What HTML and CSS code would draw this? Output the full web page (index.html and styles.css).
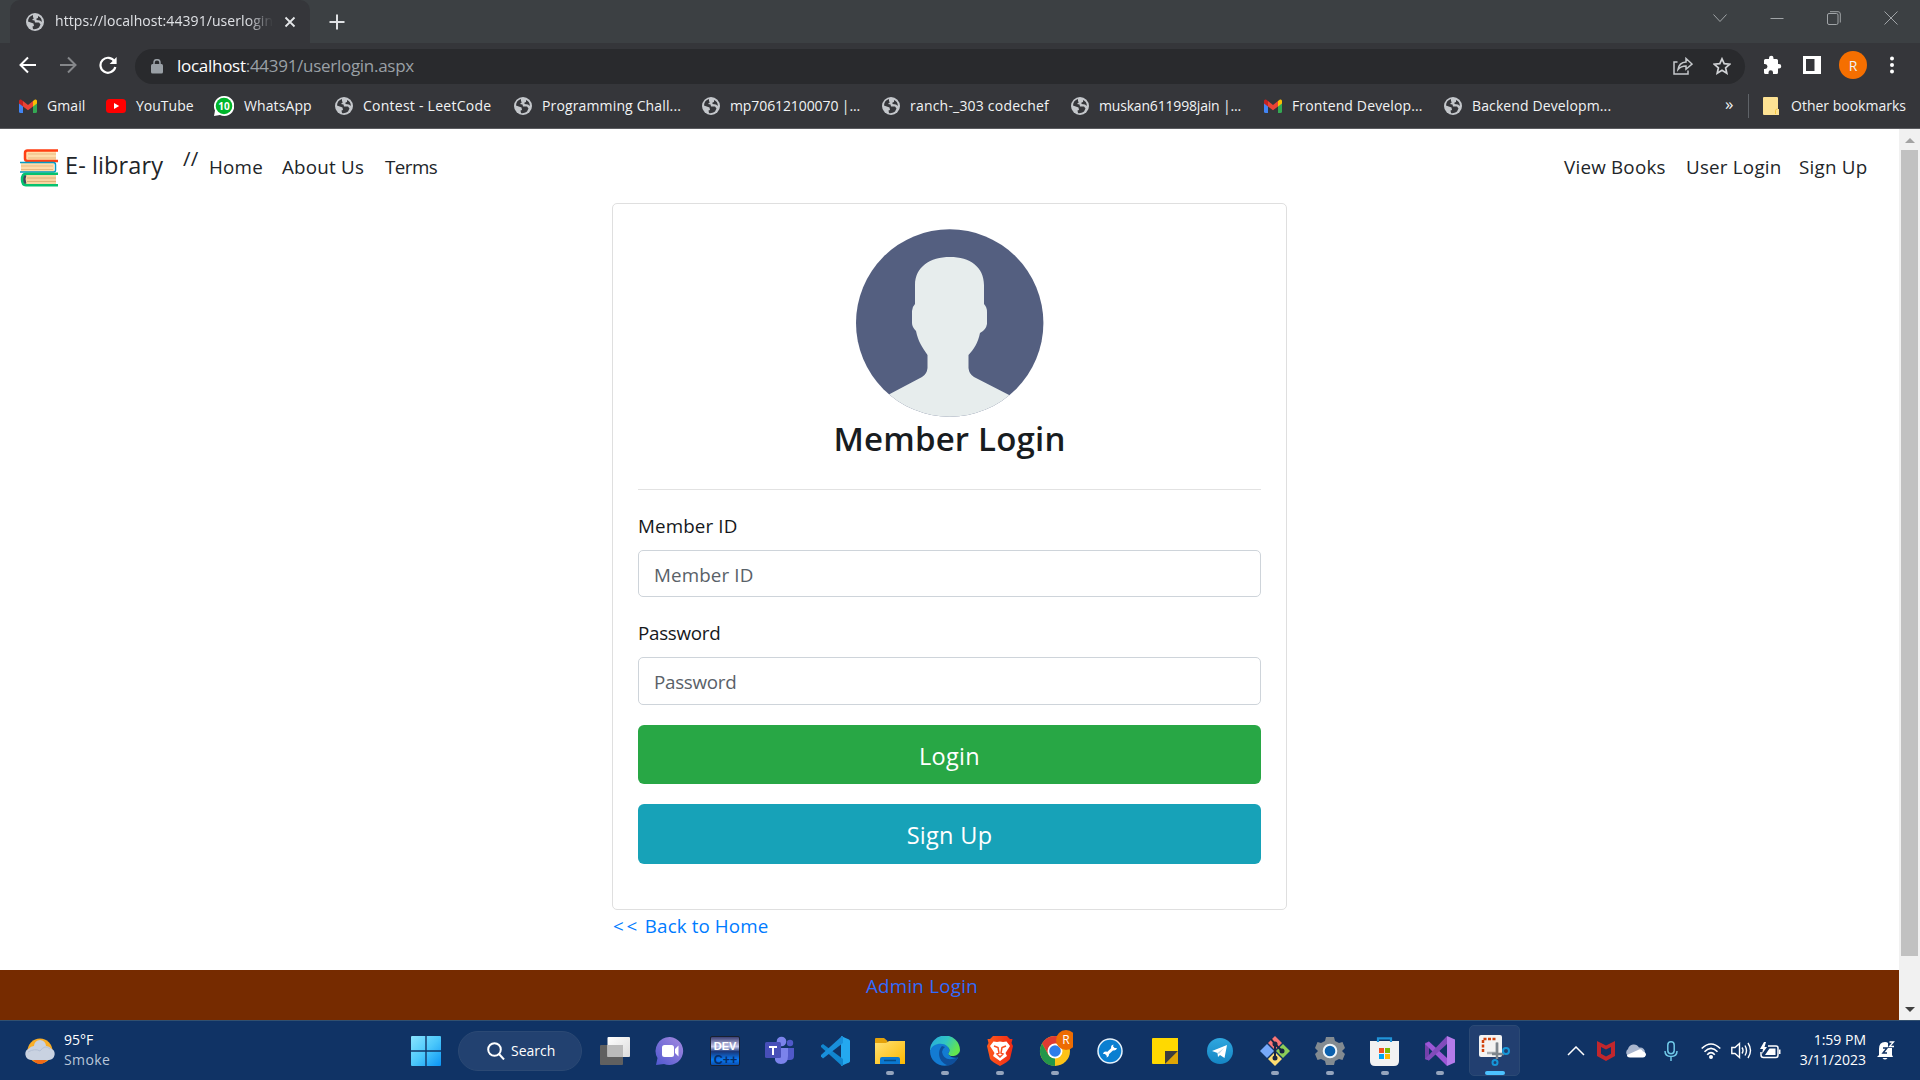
FILE: index.html
```html
<!DOCTYPE html>
<html lang="en">
<head>
<meta charset="utf-8">
<title>E- library</title>
<link rel="stylesheet" href="styles.css">
</head>
<body>
<svg class="defs" width="0" height="0">
  <defs>
    <symbol id="globe" viewBox="0 0 18 18"><circle cx="9" cy="9" r="9" fill="#c4c7cb"/><path d="M7 2C4 3 2 5 2 8.500L7.500 10.500 8 13 6.500 13.500 7 16C8.500 16.500 11 16 13 14.500L14.500 11.500 13 9.500H9L8.500 7.500 6 7 8 5 7 4.500zM12 3V5L10.500 5.500V7L14 7.500 15.800 9C16 6 14.500 4 12 3z" fill="#35363a"/></symbol>
    <symbol id="gmail" viewBox="0 0 18 14"><path d="M0 2V12.500Q0 14 1.500 14H4V5z" fill="#4285f4"/><path d="M18 2V12.500Q18 14 16.500 14H14V5z" fill="#34a853"/><path d="M14 2 16 .5Q18 0 18 2V4.500L14 7.500z" fill="#fbbc04"/><path d="M0 4.500V2Q0 0 2 .5L4 2V7.500z" fill="#c5221f"/><path d="M4 2 9 6 14 2V7.500L9 11.300 4 7.500z" fill="#ea4335"/></symbol>
    <linearGradient id="gwin" x1="0" y1="0" x2="1" y2="1"><stop offset="0" stop-color="#8ae4ff"/><stop offset=".5" stop-color="#4cc8fb"/><stop offset="1" stop-color="#0a94f5"/></linearGradient>
    <linearGradient id="gview" x1="0" y1="0" x2="1" y2="1"><stop offset="0" stop-color="#fff"/><stop offset="1" stop-color="#dcdcdc"/></linearGradient>
    <linearGradient id="gchat" x1="1" y1="0" x2="0" y2="1"><stop offset="0" stop-color="#a58ae0"/><stop offset="1" stop-color="#5058d0"/></linearGradient>
    <linearGradient id="gdev" x1="0" y1="0" x2="0" y2="1"><stop offset="0" stop-color="#363a70"/><stop offset=".35" stop-color="#c4c8ed"/><stop offset=".52" stop-color="#193779"/><stop offset=".8" stop-color="#087af5"/><stop offset="1" stop-color="#0b4ca8"/></linearGradient>
    <linearGradient id="gfold" x1="0" y1="0" x2="1" y2="1"><stop offset="0" stop-color="#ffe174"/><stop offset="1" stop-color="#fdb900"/></linearGradient>
    <linearGradient id="gedge" x1="0" y1="0" x2="1" y2=".4"><stop offset="0" stop-color="#28a8df"/><stop offset=".55" stop-color="#30c5c4"/><stop offset="1" stop-color="#63e54e"/></linearGradient>
    <linearGradient id="gbrave" x1="0" y1="0" x2="1" y2="0"><stop offset="0" stop-color="#ff5a1c"/><stop offset="1" stop-color="#ef2a15"/></linearGradient>
    <linearGradient id="gtele" x1="0" y1="0" x2="0" y2="1"><stop offset="0" stop-color="#2fa7df"/><stop offset="1" stop-color="#1586c4"/></linearGradient>
  </defs>
</svg>

<header class="browser">
  <div class="tabstrip">
    <div class="tab">
      <svg class="globe" width="18" height="18"><use href="#globe"/></svg>
      <span class="tab-title">https://localhost:44391/userlogin</span>
      <svg class="tab-close" width="12" height="12" viewBox="0 0 12 12"><path d="M1.500 1.500 10.500 10.500M10.500 1.500 1.500 10.500" stroke="#e4e6e8" stroke-width="1.800"/></svg>
    </div>
    <svg class="new-tab" width="16" height="16" viewBox="0 0 16 16"><path d="M8 .5V15.500M.5 8H15.500" stroke="#dfe1e4" stroke-width="2"/></svg>
    <div class="window-controls">
      <svg width="14" height="14" viewBox="0 0 14 14"><path d="M.5 3.500 7 10.500 13.500 3.500"/></svg>
      <svg width="14" height="14" viewBox="0 0 14 14"><path d="M.5 7.500H13.500"/></svg>
      <svg width="14" height="14" viewBox="0 0 14 14"><rect x=".5" y="2.500" width="10.500" height="11" rx="1.500"/><path d="M3 .7H11Q13.300 .7 13.300 3V11.500"/></svg>
      <svg width="14" height="14" viewBox="0 0 14 14"><path d="M.5 .5 13.500 13.500M13.500 .5 .5 13.500"/></svg>
    </div>
  </div>
  <div class="toolbar">
    <svg width="18" height="18" viewBox="0 0 18 18" fill="none" stroke="#fff" stroke-width="2"><path d="M17 9H2M9 1.500 1.500 9 9 16.500"/></svg>
    <svg width="18" height="18" viewBox="0 0 18 18" fill="none" stroke="#85878a" stroke-width="2"><path d="M1 9H16M9 1.500 16.500 9 9 16.500"/></svg>
    <svg width="18" height="18" viewBox="0 0 18 18"><path d="M15.500 5.500A7.500 7.500 0 1 0 16.300 11" fill="none" stroke="#fff" stroke-width="2.200"/><path d="M17.600 1V8H10.600z" fill="#fff"/></svg>
    <div class="omnibox">
      <svg width="12" height="15" viewBox="0 0 12 15"><rect y="5" width="12" height="9.500" rx="1.500" fill="#9aa0a6"/><path d="M3 6V3.700A3 3 0 0 1 9 3.700V6" fill="none" stroke="#9aa0a6" stroke-width="1.500"/></svg>
      <span class="url"><b>localhost</b>:44391/userlogin.aspx</span>
      <svg class="share" width="20" height="18" viewBox="0 0 20 18" fill="none" stroke="#c5c8cb" stroke-width="1.500"><path d="M4.500 5H1V17H15V13.500"/><path d="M5 12.500Q6 5.500 13 5V1.500L19 7 13 12.200V9Q8 9 5 12.500z"/></svg>
      <svg width="18" height="18" viewBox="0 0 18 18"><path d="M9 1.800 11.200 6.600 16.800 7.200 12.600 10.800 13.800 16.200 9 13.300 4.200 16.200 5.400 10.800 1.200 7.200 6.800 6.600z" fill="none" stroke="#d0d2d5" stroke-width="1.700"/></svg>
    </div>
    <div class="tools">
      <svg width="20" height="20" viewBox="0 0 20 20"><path d="M2 5.500Q2 4 3.500 4H7V3A2 2 0 0 1 11.500 3V4H14.500Q16 4 16 5.500V9H17A2 2 0 0 1 17 13.500H16V17.500Q16 19 14.500 19H11V17.500A2 2 0 0 0 6.500 17.500V19H3.500Q2 19 2 17.500V14H3A2 2 0 0 0 3 9H2z" fill="#fff"/></svg>
      <svg width="18" height="18" viewBox="0 0 18 18"><path d="M0 0H18V18H0zM3 3V15H11.500V3z" fill="#fff" fill-rule="evenodd"/></svg>
      <span class="profile">R</span>
      <svg width="6" height="18" viewBox="0 0 6 18" fill="#fff"><circle cx="3" cy="2.500" r="2"/><circle cx="3" cy="9" r="2"/><circle cx="3" cy="15.500" r="2"/></svg>
    </div>
  </div>
  <nav class="bookmarks">
    <span class="bm w-gmail"><svg width="18" height="14"><use href="#gmail"/></svg><span>Gmail</span></span>
    <span class="bm w-yt"><svg width="20" height="14" viewBox="0 0 20 14"><rect width="20" height="14" rx="3.500" fill="#f00"/><path d="M8 4V10L13.200 7z" fill="#fff"/></svg><span>YouTube</span></span>
    <span class="bm w-wa"><svg width="20" height="20" viewBox="0 0 20 20"><path d="M10 0A10 10 0 1 1 6 19L0 20 1 14.500A10 10 0 0 1 10 0" fill="#fff"/><circle cx="10" cy="10" r="8.300" fill="#00b52b"/><text x="10" y="13.500" text-anchor="middle" class="badge10">10</text></svg><span>WhatsApp</span></span>
    <span class="bm w-lc"><svg width="18" height="18"><use href="#globe"/></svg><span>Contest - LeetCode</span></span>
    <span class="bm w-pc"><svg width="18" height="18"><use href="#globe"/></svg><span>Programming Chall...</span></span>
    <span class="bm w-mp"><svg width="18" height="18"><use href="#globe"/></svg><span>mp70612100070 |...</span></span>
    <span class="bm w-rn"><svg width="18" height="18"><use href="#globe"/></svg><span>ranch-_303 codechef</span></span>
    <span class="bm w-mj"><svg width="18" height="18"><use href="#globe"/></svg><span>muskan611998jain |...</span></span>
    <span class="bm w-fe"><svg width="18" height="14"><use href="#gmail"/></svg><span>Frontend Develop...</span></span>
    <span class="bm w-be"><svg width="18" height="18"><use href="#globe"/></svg><span>Backend Developm...</span></span>
    <span class="more">»</span>
    <span class="bm other"><svg width="16" height="18" viewBox="0 0 16 18"><path d="M1 0H14Q15 0 15 1V12H16V18H1Q0 18 0 17V1Q0 0 1 0" fill="#fde293"/><path d="M12.500 17V13.500Q12.500 12 14.500 12" fill="none" stroke="#f5c842"/></svg><span>Other bookmarks</span></span>
  </nav>
</header>

<div class="viewport">
  <main class="page">
    <nav class="navbar">
      <svg class="logo" width="38" height="38" viewBox="0 0 38 38">
        <path d="M6 2H36V12H6z" fill="#ffdcaa"/><path d="M8 5H36M8 9H36" stroke="#e9b981"/>
        <path d="M38 1.500H7.500Q5 1.500 5 4V9.500Q5 12 7.500 12H38" fill="none" stroke="#ff3f13" stroke-width="2.500"/>
        <path d="M1 14H34V23H1z" fill="#ffdcaa"/><path d="M1 17H33M1 20.500H33" stroke="#e9b981"/>
        <path d="M0 13.500H33.500Q35.500 13.500 35.500 16V21Q35.500 23 33.500 23H0" fill="none" stroke="#069bc5" stroke-width="1.500"/>
        <path d="M5 25H36V36H5z" fill="#f8d5a2"/><path d="M7 29H36M7 32.500H36" stroke="#deb078"/><path d="M5 26Q3 30.500 5 35" stroke="#41475e" stroke-width="3" fill="none"/>
        <path d="M38 24.800H6Q2 25 2 30.500T6 36.300H38" fill="none" stroke="#06c270" stroke-width="2.500"/>
      </svg>
      <span class="brand">E- library</span>
      <span class="slashes">//</span>
      <a class="home">Home</a><a class="about">About Us</a><a class="terms">Terms</a>
      <a class="view">View Books</a><a class="user">User Login</a><a class="signup">Sign Up</a>
    </nav>
    <section class="card">
      <svg class="avatar" width="188" height="188" viewBox="0 0 188 188">
        <defs><clipPath id="disc"><circle cx="93.700" cy="94" r="93.700"/></clipPath></defs>
        <g clip-path="url(#disc)"><rect width="188" height="188" fill="#545f80"/>
        <path d="M94 28C114 28 128 38 128 56V75Q131 78 131 83V95Q130 101 124 104C122 114 118 120 112.500 126V139Q113 145 118 148L157 168V188H30V167L66 148Q71 145 71.500 139V126C66 118 62 112 60 102Q56 98 56 94V82Q56 78 59 75V56C59 38 74 28 94 28z" fill="#e7eded"/></g>
      </svg>
      <h1><span>Member Login</span></h1>
      <hr>
      <label class="l-id">Member ID</label>
      <div class="field f-id"><span>Member ID</span></div>
      <label class="l-pw">Password</label>
      <div class="field f-pw"><span>Password</span></div>
      <div class="btn green"><span>Login</span></div>
      <div class="btn teal"><span>Sign Up</span></div>
    </section>
    <a class="back"><span class="arrows">&lt;&lt;</span> Back to Home</a>
    <footer><a>Admin Login</a></footer>
  </main>
  <aside class="scrollbar">
    <svg width="10" height="5" viewBox="0 0 10 5"><path d="M5 0 10 5H0z" fill="#a3a3a3"/></svg>
    <div class="thumb"></div>
    <svg width="10" height="5" viewBox="0 0 10 5"><path d="M0 0H10L5 5z" fill="#404040"/></svg>
  </aside>
</div>

<footer class="taskbar">
  <div class="weather">
    <svg width="30" height="26" viewBox="0 0 30 26"><circle cx="15" cy="13" r="12.500" fill="#f9ae28"/><path d="M7 20H23Q20 26 15 26T7 20" fill="#f26a16"/><path d="M6 22A6 6 0 0 1 4 10.500 6 6 0 0 1 9 8 6 6 0 0 1 21 8 6 6 0 0 1 26 10.500 6 6 0 0 1 24 22z" fill="#c9d2e1"/><path d="M3 14Q10 10 15 13 20 6 25 11" stroke="#b4c0d5" fill="none"/></svg>
    <div class="wtext"><span class="temp">95°F</span><span class="smoke">Smoke</span></div>
  </div>
  <svg class="start" width="30" height="30" viewBox="0 0 30 30"><path d="M1 0H14.300V14.300H0V1Q0 0 1 0M15.700 0H29Q30 0 30 1V14.300H15.700zM0 15.700H14.300V30H1Q0 30 0 29zM15.700 15.700H30V29Q30 30 29 30H15.700z" fill="url(#gwin)"/></svg>
  <div class="search"><svg width="18" height="18" viewBox="0 0 18 18" fill="none" stroke="#fff" stroke-width="2"><circle cx="7.500" cy="7.500" r="6.300"/><path d="M12 12 17 17.500"/></svg><span>Search</span></div>
  <div class="apps">
    <span class="app"><svg width="30" height="30" viewBox="0 0 30 30"><rect y="9" width="23" height="20" rx="1" fill="#606060"/><rect x="7.500" y="1" width="22.500" height="20" rx="1" fill="url(#gview)"/><path d="M7.500 9H23V21H7.500z" fill="#bbb"/></svg></span>
    <span class="app"><svg width="30" height="30" viewBox="0 0 30 30"><path d="M15 1A14 14 0 1 1 9 28L1 29 2.500 22A14 14 0 0 1 15 1" fill="url(#gchat)"/><rect x="7" y="9" width="12" height="12" rx="2.500" fill="#fff"/><path d="M20 13 23.500 9.500V20.500L20 17z" fill="#fff"/></svg></span>
    <span class="app"><svg width="30" height="30" viewBox="0 0 30 30"><rect x=".5" y=".5" width="29" height="29" rx="1.500" fill="url(#gdev)" stroke="#18202f"/><text x="15" y="13.500" text-anchor="middle" class="dev">DEV</text><text x="15.500" y="27.500" text-anchor="middle" class="cpp">C++</text></svg></span>
    <span class="app"><svg width="30" height="30" viewBox="0 0 30 30"><circle cx="16.500" cy="5.500" r="4.800" fill="#7b83eb"/><circle cx="25" cy="7" r="3.200" fill="#5059c9"/><path d="M19 12H29V20Q29 24 25 24H20z" fill="#5059c9"/><path d="M10 12H23V20Q23 28 16 28T10 20z" fill="#7b83eb"/><rect y="6" width="16" height="16" rx="1.500" fill="#474fb8"/><path d="M4 10H12V12H9V19H7V12H4z" fill="#fff"/></svg></span>
    <span class="app"><svg width="30" height="30" viewBox="0 0 30 30"><path d="M21 0 29 3.500Q30 4 30 5V25Q30 26 29 26.500L21 30Z" fill="#24a8ef"/><path d="M1 9.500 3 8 23 23V30L21.500 29.500 1 11z" fill="#1186cf"/><path d="M1 20.500 3 22.500 23 7V0L21.500 .5 1 19z" fill="#198fdb"/></svg></span>
    <span class="app run"><svg width="30" height="30" viewBox="0 0 30 30"><path d="M0 3Q0 2 1 2H9L12.500 5V11H0z" fill="#e4a20a"/><path d="M0 7H11L14 5H30V28H0z" fill="url(#gfold)"/><path d="M5 28V23Q5 21 7 21H23Q25 21 25 23V28z" fill="#0b78cf"/><path d="M9 24.500H21" stroke="#074b83" stroke-width="1.500"/></svg></span>
    <span class="app run"><svg width="30" height="30" viewBox="0 0 30 30"><path d="M0 15A15 15 0 0 1 30 14C30 20 20 22 18 18Q22 12 15 10 5 8 0 15" fill="url(#gedge)"/><path d="M0 15C2 7 13 6 17 10 22 15 18 17 18 18Q22 23 28 21.500C21 35 0 31 0 15" fill="#137bd2"/><path d="M12 10C7 15 8 27 19 29.500Q25 28 28 21.500 14 27 12 16 12 13 15 11" fill="#0f4f9b"/></svg></span>
    <span class="app run"><svg width="30" height="30" viewBox="0 0 30 30"><path d="M8 0H22L25 3 27.500 3 26.500 7 28 10 25 23Q23 26 15 30 7 26 5 23L2 10 3.500 7 2.500 3 5 3z" fill="url(#gbrave)"/><path d="M5 10 8.500 5.500 12 6 15 5.500 18 6 21.500 5.500 25 10 20.500 17 22 20 15 25 8 20 9.500 17z" fill="#fff"/><path d="M9 10 13 11.500 14 17 12 18 15 21 18 18 16 17 17 11.500 21 10" fill="none" stroke="#fa4d1e" stroke-width="1.500"/></svg></span>
    <span class="app run"><svg class="chrome" width="36" height="42" viewBox="-3 -6 36 42"><circle cx="15" cy="15" r="15" fill="#fdc317"/><path d="M2 7.500A15 15 0 0 1 28 7.500H15L8.500 19z" fill="#df3a32"/><path d="M2 7.500 8.500 19Q11 22 15 22L15 30A15 15 0 0 1 2 7.500" fill="#23964a"/><circle cx="15" cy="15" r="7.500" fill="#fff"/><circle cx="15" cy="15" r="5.800" fill="#2e7de9"/><circle cx="26" cy="4" r="10" fill="#ed6c02"/><text x="26" y="8.300" text-anchor="middle" class="minir">R</text></svg></span>
    <span class="app"><svg width="26" height="26" viewBox="0 0 26 26"><circle cx="13" cy="13" r="12" fill="#0a7fd1" stroke="#e7f2fb" stroke-width="1.500"/><path d="M9 17 17 9.500" stroke="#fff" stroke-width="3"/><path d="M16.500 6.500A3 3 0 1 0 20 10L17.500 10 16 8.500zM9.500 19.500A3 3 0 1 0 6 16L8.500 16 10 17.500z" fill="#fff"/></svg></span>
    <span class="app"><svg width="26" height="26" viewBox="0 0 26 26"><path d="M1 0H26V13L13 26H1Q0 26 0 25V1Q0 0 1 0" fill="#ffd900"/><path d="M13 26V13H26z" fill="#3d3d3d"/><path d="M13 26 26 13V26z" fill="#dfa505"/></svg></span>
    <span class="app"><svg width="26" height="26" viewBox="0 0 26 26"><circle cx="13" cy="13" r="13" fill="url(#gtele)"/><path d="M5 13 20 7 17.500 20 13 17 11 19 10.500 15z" fill="#fff"/><path d="M10.500 15 17 10 12 16" fill="#bad7e8"/></svg></span>
    <span class="app run"><svg width="30" height="30" viewBox="0 0 30 30"><path d="M15 0 22 7 15 14 8 7z" fill="#f87575"/><path d="M7 8 14 15 7 22 0 15z" fill="#76a9fa"/><path d="M23 8 30 15 23 22 16 15z" fill="#8cce58"/><path d="M15 16 22 23 15 30 8 23z" fill="#ffdd71"/><path d="M11 3 15 8V23M16 9 21 14" fill="none" stroke="#182642" stroke-width="2"/><circle cx="15" cy="8" r="2.500" fill="#182642"/><circle cx="15" cy="22" r="2.500" fill="#182642"/><circle cx="22" cy="15" r="2.500" fill="#182642"/></svg></span>
    <span class="app run"><svg width="30" height="30" viewBox="0 0 30 30"><path d="M11 1H19L20 5 24 7 27.500 6 30 12 27 15 30 18 27.500 24 24 23 20 25 19 29H11L10 25 6 23 2.500 24 0 18 3 15 0 12 2.500 6 6 7 10 5z" fill="#838b91"/><circle cx="15" cy="15" r="6.300" fill="#0b60ad" stroke="#eef5f9" stroke-width="2"/></svg></span>
    <span class="app run"><svg width="30" height="30" viewBox="0 0 30 30"><path d="M0 5H29V25Q29 30 24 30H5Q0 30 0 25z" fill="#f2f2f2"/><path d="M8 6V2.300H21V6" fill="none" stroke="#2094d8" stroke-width="2.200"/><path d="M9 12H14V17H9z" fill="#f25022"/><path d="M15 12H20V17H15z" fill="#7fba00"/><path d="M9 18H14V23H9z" fill="#00a4ef"/><path d="M15 18H20V23H15z" fill="#ffb900"/></svg></span>
    <span class="app run"><svg width="30" height="30" viewBox="0 0 30 30"><path d="M22 0 30 3.500V26.500L22 30z" fill="#b57bea"/><path d="M0 7 4 5.500V24.500L0 23z" fill="#7440aa"/><path d="M4 5.500 22 22V30L0 8z" fill="#9c57d6"/><path d="M0 23 22 0V8L4 24.500z" fill="#814bbb"/></svg></span>
    <span class="app active"><svg width="31" height="31" viewBox="0 0 31 31"><rect x="0" y="0" width="23" height="22" rx="2" fill="#f3f3f3"/><path d="M4 17V4H17" fill="none" stroke="#d2430d" stroke-width="2.500" stroke-dasharray="3 1.500"/><path d="M8 18H18V7" fill="none" stroke="#a9adb0" stroke-width="2.500"/><path d="M18 8V24M13 19H25" stroke="#7d858c" stroke-width="2.500"/><circle cx="27" cy="16" r="3" fill="none" stroke="#1697d8" stroke-width="2"/><circle cx="16" cy="27.500" r="2.500" fill="none" stroke="#1697d8" stroke-width="2"/></svg></span>
  </div>
  <div class="tray">
    <svg class="chev" width="18" height="10" viewBox="0 0 18 10"><path d="M1 9 9 1 17 9" fill="none" stroke="#fff" stroke-width="1.500"/></svg>
    <svg class="mcafee" width="18" height="20" viewBox="0 0 18 20"><path d="M0 0 9 4.500 18 0V15L9 20 0 15zM4 6V12.800L9 15.500 14 12.800V6L9 8.500z" fill="#c1272d" fill-rule="evenodd"/></svg>
    <svg class="cloud" width="20" height="14" viewBox="0 0 20 14"><path d="M4 13A4.500 4.500 0 0 1 2 5 6 6 0 0 1 13 3.500Q19 3 19 9z" fill="#a9b6ce"/><path d="M4 13.500Q1 13.500 1 11L12 6Q15 4 17 7.500 20 8 20 11 19 13.500 17 13.500z" fill="#fff"/></svg>
    <svg class="mic" width="14" height="20" viewBox="0 0 14 20" fill="none" stroke="#70c9e8" stroke-width="1.500"><rect x="3.800" y=".8" width="6.400" height="12" rx="3.200"/><path d="M1 10Q1 15.500 7 15.500T13 10M7 15.500V20"/></svg>
    <svg class="wifi" width="20" height="16" viewBox="0 0 20 16" fill="none" stroke="#fff" stroke-width="1.600"><path d="M.7 5.500Q10-3.500 19.300 5.500M3.500 8.800Q10 2 16.500 8.800M6.200 11.800Q10 7.500 13.800 11.800"/><circle cx="10" cy="14" r="1.200" fill="#fff"/></svg>
    <svg class="vol" width="21" height="17" viewBox="0 0 21 17" fill="none" stroke="#fff" stroke-width="1.400"><path d="M.8 5.500H4L8.500 1.500V15.500L4 11.500H.8z"/><path d="M11 5.500Q13 8.500 11 11.500M14 3.500Q17 8.500 14 13.500M17 1Q22 8.500 17 16"/></svg>
    <svg class="bat" width="21" height="17" viewBox="0 0 21 17"><path d="M8 4H16Q18 4 18 6V13Q18 15.500 16 15.500H3.500Q1 15.500 1 13V10" fill="none" stroke="#fff" stroke-width="1.500"/><path d="M9.500 6.500H15.500V13H5zM4 0 0 7H3L2 12 7 5H4.500L6 0zM19 7.500H20.500V12H19z" fill="#fff"/></svg>
    <div class="clock"><span class="time">1:59 PM</span><span class="date">3/11/2023</span></div>
    <svg class="bell" width="18" height="19" viewBox="0 0 18 19"><path d="M2 14V8Q2 1 8 1Q10 1 11 2V7H15V14L16 16H0zM5.500 17H10.500Q8 20 5.500 17z" fill="#fff"/><path d="M6 7H10L6 12H10" fill="none" stroke="#103263" stroke-width="1.500"/><path d="M12.500 1H16.500L12.500 5.500H17" fill="none" stroke="#fff" stroke-width="1.300"/></svg>
  </div>
</footer>
</body>
</html>
```
FILE: styles.css
```css
* { box-sizing: border-box; }
body { margin: 0; width: 1920px; height: 1080px; overflow: hidden; display: flex; flex-direction: column; font-family: "Open Sans", "Noto Sans", sans-serif; background: #fff; color: #212529; }
svg { display: block; flex: none; }
span, a { white-space: nowrap; }
.defs { position: absolute; }

/* Browser window */
.browser { height: 129px; background: #35363a; border-bottom: 1px solid #5b5c60; flex: none; color: #f1f3f4; }
.tabstrip { height: 43px; background: #3c4043; display: flex; align-items: center; padding-left: 10px; }
.tab { width: 300px; height: 43px; background: #35363a; border-radius: 10px 10px 0 0; display: flex; align-items: center; padding-left: 16px; }
.tab-title { width: 218px; margin: 0 3px 2px 11px; font-size: 14px; color: #dfe1e5; overflow: hidden; letter-spacing: .07px; -webkit-mask-image: linear-gradient(90deg, #000 88%, transparent); mask-image: linear-gradient(90deg, #000 88%, transparent); }
.tab-close { margin-left: 8px; }
.new-tab { margin-left: 19px; }
.window-controls { margin-left: auto; display: flex; gap: 43px; padding: 0 22px 7px 0; }
.window-controls svg { fill: none; stroke: #a0a4a7; stroke-width: 1; }
.toolbar { height: 44px; display: flex; align-items: center; padding-left: 19px; gap: 22px; }
.omnibox { width: 1610px; height: 35px; border-radius: 18px; background: #292a2d; display: flex; align-items: center; padding: 0 14px 0 16px; margin: 2px 0 0 -4px; }
.url { font-size: 17px; color: #9aa0a6; margin: 0 0 2px 14px; letter-spacing: -.28px; }
.url b { color: #fff; font-weight: 400; }
.share { margin-left: auto; margin-right: 20px; }
.tools { display: flex; align-items: center; }
.tools svg:first-child { margin-left: -5px; margin-right: 21px; }
.profile { width: 28px; height: 28px; margin: 0 22px 0 18px; border-radius: 50%; background: #f56f00; display: grid; place-items: center; font-size: 14px; }
.bookmarks { height: 38px; display: flex; align-items: center; padding-left: 19px; font-size: 14px; }
.bm { display: flex; align-items: center; gap: 10px; flex: none; }
.bm > span { padding-bottom: 2px; }
.w-gmail { width: 87px; letter-spacing: .1px; }
.w-yt { width: 108px; }
.w-wa { width: 121px; letter-spacing: .1px; }
.w-lc { width: 179px; letter-spacing: .25px; }
.w-pc { width: 188px; letter-spacing: .14px; }
.w-mp { width: 180px; letter-spacing: -.1px; }
.w-rn { width: 189px; letter-spacing: .2px; }
.w-mj { width: 193px; letter-spacing: -.18px; }
.w-fe { width: 180px; letter-spacing: .14px; }
.w-be { width: 281px; letter-spacing: .12px; }
.badge10 { font: bold 10px "Open Sans", sans-serif; fill: #fff; letter-spacing: 0; }
.more { width: 23px; font-size: 17px; line-height: 18px; padding-bottom: 5px; }
.other { height: 24px; border-left: 1px solid #5f6368; padding-left: 14px; gap: 12px; }

/* Web page */
.viewport { height: 891px; display: flex; flex: none; }
.page { width: 1899px; display: flex; flex-direction: column; font-size: 18.800px; }
.navbar { height: 74px; flex: none; display: flex; align-items: baseline; padding-left: 20px; letter-spacing: .22px; }
.logo { align-self: flex-start; margin-top: 20px; }
.brand { font-size: 23.500px; line-height: 72px; width: 125px; padding-left: 7px; letter-spacing: .1px; }
.slashes { width: 26px; font-size: 20.500px; transform: translateY(-8px); }
.home { width: 73px; } .about { width: 103px; } .terms { width: 1179px; letter-spacing: -.55px; }
.view { width: 122px; } .user { width: 113px; }
.card { width: 675px; height: 707px; flex: none; margin-left: 612px; border: 1px solid #dfdfdf; border-radius: 5px; padding: 25px; display: flex; flex-direction: column; }
.avatar { align-self: center; }
h1 { margin: 0; height: 46px; line-height: 44px; font-size: 33px; font-weight: 600; text-align: center; letter-spacing: .2px; color: #181c1f; }
hr { width: 100%; height: 1px; border: 0; background: #e2e2e2; margin: 26px 0 20px; flex: none; }
label { height: 40px; line-height: 32px; color: #15181b; }
.l-id, .f-id { letter-spacing: .13px; }
.l-pw, .f-pw { letter-spacing: -.28px; }
.field { height: 48px; flex: none; border: 1px solid #ced4da; border-radius: 5px; padding-left: 15px; line-height: 48px; color: #596168; }
.f-id { height: 47px; margin-bottom: 20px; }
.btn { height: 60px; flex: none; margin-top: 20px; border-radius: 6px; text-align: center; line-height: 62px; font-size: 23.500px; letter-spacing: .3px; color: #fff; }
.green { height: 59px; background: #28a745; } .teal { background: #17a2b8; }
.back { margin-left: 613px; height: 61px; line-height: 33px; color: #007bff; letter-spacing: .1px; }
.arrows { letter-spacing: 2.700px; }
.page footer { height: 50px; flex: none; background: #762b00; padding-left: 866px; line-height: 32px; color: #2f6cff; letter-spacing: .22px; }
.scrollbar { width: 21px; background: #f1f1f1; display: flex; flex-direction: column; align-items: center; padding: 9px 0 8px; }
.thumb { width: 17px; height: 806px; margin: 7px 0 auto; background: #c1c1c1; }

/* Taskbar */
.taskbar { height: 60px; flex: none; background: #103365; border-top: 1px solid #32506f; display: flex; align-items: center; color: #fff; font-size: 14px; }
.weather { width: 411px; padding-left: 25px; display: flex; align-items: center; gap: 9px; }
.wtext { display: flex; flex-direction: column; line-height: 20px; padding-bottom: 2px; }
.smoke { color: #b9c6d9; letter-spacing: .4px; }
.search { width: 124px; height: 40px; margin: 0 5px 0 17px; border-radius: 20px; background: #224170; border: 1px solid #2b4974; display: flex; align-items: center; padding-left: 28px; gap: 6px; }
.search span { padding-bottom: 1px; }
.apps { display: flex; height: 59px; }
.app { width: 55px; display: flex; align-items: center; justify-content: center; position: relative; }
.run::after { content: ""; position: absolute; left: 24px; bottom: 5px; width: 8px; height: 4px; border-radius: 2px; background: #95a5bd; }
.active::before { content: ""; position: absolute; z-index: -1; inset: 4px 2px; border-radius: 5px; background: #223f70; border: 1px solid #2b4974; }
.active { z-index: 0; }
.active::after { content: ""; position: absolute; left: 18px; bottom: 5px; width: 20px; height: 4px; border-radius: 2px; background: #4cc2ff; }
.dev { font: bold 11px "Liberation Sans", sans-serif; fill: #fff; }
.cpp { font: bold 12.500px "Liberation Sans", sans-serif; fill: #062c66; }
.minir { font: 12px "Open Sans", sans-serif; fill: #fff; }
.tray { display: flex; align-items: center; margin-left: 45px; }
.mcafee { margin-left: 12px; } .cloud { margin-left: 11px; } .mic { margin-left: 18px; }
.wifi { margin-left: 23px; } .vol { margin-left: 10px; } .bat { margin-left: 8px; }
.clock { width: 85px; display: flex; flex-direction: column; align-items: flex-end; line-height: 20px; padding-bottom: 2px; }
.bell { margin-left: 11px; }
```
